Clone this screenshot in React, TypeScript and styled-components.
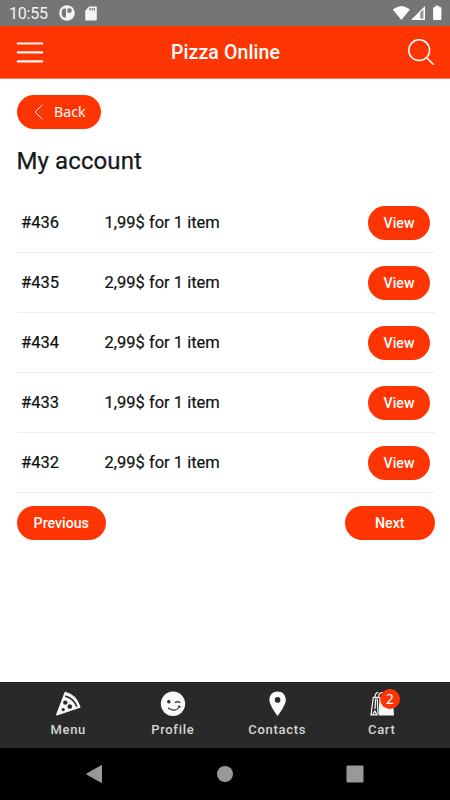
import React from "react";
import styled, { createGlobalStyle } from "styled-components";

const RED = "#ff3403";

const GlobalStyle = createGlobalStyle`
  * { box-sizing: border-box; }
  body { margin: 0; background: #fff; font-family: Roboto, "Liberation Sans", sans-serif; }
  svg { display: block; flex: none; }
`;

const Screen = styled.div`
  width: 450px;
  height: 800px;
  display: flex;
  flex-direction: column;
  overflow: hidden;
  background: #fff;
`;

const StatusBar = styled.div`
  height: 26px;
  flex: none;
  display: flex;
  align-items: center;
  background: #757575;
  color: #fff;
  padding: 0 8px 0 9px;
`;

const Clock = styled.span`
  width: 50px;
  font-size: 16px;
  line-height: 26px;
  letter-spacing: -0.2px;
  padding-top: 2px;
  color: #f3f3f3;
`;

const StatusIcons = styled.div`
  display: flex;
  align-items: center;
  gap: 10px;
`;

const StatusSpacer = styled.div`
  flex: 1;
`;

const Header = styled.header`
  height: 53px;
  flex: none;
  display: grid;
  grid-template-columns: 60px 1fr 60px;
  align-items: center;
  background: ${RED};
  border-bottom: 1px solid #ff765a;
  padding: 0 15px 0 16px;
`;

const HeaderTitle = styled.h1`
  margin: 0;
  padding-top: 1px;
  font-size: 19.5px;
  font-weight: 500;
  line-height: 24px;
  letter-spacing: 0.1px;
  text-align: center;
  color: #fff;
`;

const HeaderEnd = styled.div`
  justify-self: end;
`;

const Content = styled.main`
  flex: 1;
  padding: 16px 15.5px 0 16.5px;
`;

const Button = styled.button<{ $width: number }>`
  width: ${(p) => p.$width}px;
  height: 34px;
  border: 0;
  border-radius: 17px;
  padding: 1px 0 0;
  display: flex;
  align-items: center;
  justify-content: center;
  background: ${RED};
  color: #fff;
  font: 500 14.2px/21px Roboto, sans-serif;
`;

const BackButton = styled(Button)`
  justify-content: flex-start;
  padding: 0 0 0 17px;
  gap: 11.5px;
  font: 400 14.2px/20px "Noto Sans", sans-serif;
`;

const PageTitle = styled.h2`
  margin: 17px 0 17px;
  font-size: 24px;
  font-weight: 400;
  line-height: 30px;
  letter-spacing: 0.1px;
  color: #17191b;
  -webkit-text-stroke: 0.25px #17191b;
`;

const OrderRow = styled.div`
  height: 60px;
  display: grid;
  grid-template-columns: 83.5px 1fr auto;
  align-items: center;
  padding: 0 4.5px 0 4.5px;
  border-bottom: 1px solid #eee;
  font-size: 16.5px;
  line-height: 22px;
  color: #111;
  -webkit-text-stroke: 0.2px #111;

  ${Button} { -webkit-text-stroke: 0; }
`;

const Pager = styled.div`
  display: flex;
  justify-content: space-between;
  padding-top: 13px;
`;

const TabBar = styled.nav`
  height: 66px;
  flex: none;
  display: grid;
  grid-template-columns: repeat(4, 104.5px);
  justify-content: center;
  background: #292929;
  border-top: 1px solid #1c1c1c;
`;

const Tab = styled.div`
  display: flex;
  flex-direction: column;
  align-items: center;
  padding-top: 8px;
  gap: 5px;
  font-size: 13px;
  font-weight: 500;
  line-height: 16px;
  letter-spacing: 0.7px;
  color: #d4d4d4;
`;

const TabIcon = styled.div`
  position: relative;
  height: 26px;
`;

const Badge = styled.span`
  position: absolute;
  top: -2px;
  left: 11px;
  width: 20px;
  height: 20px;
  border-radius: 50%;
  background: ${RED};
  color: #fff;
  font: 400 13.5px/20px "Noto Sans", sans-serif;
  letter-spacing: 0;
  text-align: center;
`;

const SystemNav = styled.div`
  height: 52px;
  flex: none;
  display: grid;
  grid-template-columns: repeat(3, 130px);
  justify-content: center;
  align-items: center;
  justify-items: center;
  background: #000;
`;

const AppNotice = () => (
  <svg width="16" height="16" viewBox="0 0 16 16">
    <circle cx="8" cy="8" r="7.8" fill="#f4f4f4" />
    <path d="M6.9 3.5H5.4C3.6 3.5 2.7 5 2.7 7.2v1.2c0 2 .9 3.7 2.6 4h1.6z" fill="#757575" />
    <circle cx="10.4" cy="5.6" r="2.4" fill="#757575" />
    <circle cx="10.1" cy="5.5" r=".8" fill="#aaa" />
  </svg>
);

const SdCard = () => (
  <svg width="12" height="15" viewBox="0 0 12 15">
    <path d="M4.2.5H11q.8 0 .8.8v12.4q0 .8-.8.8H1q-.8 0-.8-.8V4.7z" fill="#f4f4f4" />
    <path d="M5 2v2.4M7.2 2v2.4M9.4 2v2.4" stroke="#666" strokeWidth="1.1" />
  </svg>
);

const Signals = () => (
  <svg width="50" height="16" viewBox="392 5 50 16">
    <path d="M392.8 9.6Q401.4 2.5 410 9.6L401.4 20z" fill="#fff" />
    <path d="M411 20L425 6v14z" fill="#fff" />
    <path d="M420.4 12.5l3-2.8v8.8h-3z" fill="#757575" />
    <path d="M422.3 12v5.8" stroke="#ddd" strokeWidth=".7" />
    <path d="M433.8 7.2h1.4V5.8h4v1.4h1.5q.7 0 .7.7v11.4q0 .7-.7.7h-6.9q-.7 0-.7-.7V7.9q0-.7.7-.7z" fill="#fff" />
  </svg>
);

const Hamburger = () => (
  <svg width="28" height="24" viewBox="0 0 28 24">
    <path d="M1.8 3.5h24.4M1.8 12.4h24.4M1.8 21.4h24.4" stroke="#fff5f2" strokeWidth="2.2" strokeLinecap="round" />
  </svg>
);

const Search = () => (
  <svg width="28" height="28" viewBox="0 0 28 28">
    <circle cx="12.2" cy="12.2" r="10.4" fill="none" stroke="#fff" strokeWidth="1.5" />
    <path d="M19.5 19.5l7.2 7.2" stroke="#fff" strokeWidth="1.6" />
  </svg>
);

const Chevron = () => (
  <svg width="9" height="16" viewBox="0 0 9 16">
    <path d="M8.3 1L1 8l7.3 7" fill="none" stroke="#fff" strokeWidth="1" />
  </svg>
);

const Pizza = () => (
  <svg width="26" height="26" viewBox="0 0 26 26">
    <path d="M10.2 1.4Q21.2 4 24.8 16L1.8 23.8z" fill="#f7f7f7" stroke="#f7f7f7" strokeWidth="1.4" strokeLinejoin="round" />
    <path d="M10.8 5.2Q18.6 7.5 21.6 15" fill="none" stroke="#292929" strokeWidth="1.6" strokeLinecap="round" />
    <circle cx="10.3" cy="11.6" r="2.2" fill="#292929" />
    <circle cx="14.8" cy="15.6" r="2.3" fill="#292929" />
    <circle cx="8.2" cy="18.6" r="1.6" fill="#292929" />
  </svg>
);

const Wink = () => (
  <svg width="26" height="26" viewBox="0 0 26 26">
    <circle cx="13" cy="12.8" r="12.2" fill="#f8fafa" />
    <circle cx="8.8" cy="10.7" r="1.7" fill="#292929" />
    <path d="M15.2 11.5q2.5-1.8 4.8 0" fill="none" stroke="#292929" strokeWidth="1.1" strokeLinecap="round" />
    <path d="M8.6 17.2q6.8 4.7 11-1.7M18.5 15l1.7.9" fill="none" stroke="#292929" strokeWidth="1.2" strokeLinecap="round" />
  </svg>
);

const Pin = () => (
  <svg width="26" height="26" viewBox="0 0 26 26">
    <path fillRule="evenodd" d="M13.6.6C8.9.6 5.4 4.1 5.4 8.8c0 5.8 8.2 16.2 8.2 16.2s8.2-10.4 8.2-16.2c0-4.7-3.5-8.2-8.2-8.2zM13.6 6.1a2.8 2.8 0 1 1 0 5.6 2.8 2.8 0 0 1 0-5.6z" fill="#f8fafa" />
  </svg>
);

const Bags = () => (
  <svg width="26" height="26" viewBox="0 0 26 26">
    <path d="M10.3 6H23.8l1.2 18.6H9.8z" fill="#f8fafa" />
    <path d="M8.9 6.4H4.3L2 23.9h5.9l-2-4-2 3.4M6.6 7.6L6 18M8.2 7.2l.8 16" fill="none" stroke="#f8fafa" strokeWidth="1.2" />
    <path d="M6.1 6.2V4.5Q6.6 1.7 9.4 1.3M9.7 7V5.2q.5-3.4 4-3.8" fill="none" stroke="#f8fafa" strokeWidth="1.2" />
    <path d="M14.6 15h1.6" stroke="#292929" strokeWidth="1" />
  </svg>
);

const orders = [
  { id: "#436", summary: "1,99$ for 1 item" },
  { id: "#435", summary: "2,99$ for 1 item" },
  { id: "#434", summary: "2,99$ for 1 item" },
  { id: "#433", summary: "1,99$ for 1 item" },
  { id: "#432", summary: "2,99$ for 1 item" },
];

const tabs = [
  { label: "Menu", Icon: Pizza },
  { label: "Profile", Icon: Wink },
  { label: "Contacts", Icon: Pin },
  { label: "Cart", Icon: Bags, count: 2 },
];

export default function App() {
  return (
    <Screen>
      <GlobalStyle />
      <StatusBar>
        <Clock>10:55</Clock>
        <StatusIcons>
          <AppNotice />
          <SdCard />
        </StatusIcons>
        <StatusSpacer />
        <Signals />
      </StatusBar>
      <Header>
        <Hamburger />
        <HeaderTitle>Pizza Online</HeaderTitle>
        <HeaderEnd>
          <Search />
        </HeaderEnd>
      </Header>
      <Content>
        <BackButton $width={84}>
          <Chevron />
          Back
        </BackButton>
        <PageTitle>My account</PageTitle>
        {orders.map((order) => (
          <OrderRow key={order.id}>
            <span>{order.id}</span>
            <span>{order.summary}</span>
            <Button $width={62}>View</Button>
          </OrderRow>
        ))}
        <Pager>
          <Button $width={89.5}>Previous</Button>
          <Button $width={89.5}>Next</Button>
        </Pager>
      </Content>
      <TabBar>
        {tabs.map(({ label, Icon, count }) => (
          <Tab key={label}>
            <TabIcon>
              <Icon />
              {count && <Badge>{count}</Badge>}
            </TabIcon>
            {label}
          </Tab>
        ))}
      </TabBar>
      <SystemNav>
        <svg width="20" height="20" viewBox="0 0 20 20">
          <path d="M16.5 1.5v17L1.5 10z" fill="#999" stroke="#999" strokeLinejoin="round" />
        </svg>
        <svg width="18" height="18" viewBox="0 0 18 18">
          <circle cx="9" cy="9" r="8" fill="#999" />
        </svg>
        <svg width="18" height="18" viewBox="0 0 18 18">
          <rect x=".5" y=".5" width="17" height="17" rx="1" fill="#999" />
        </svg>
      </SystemNav>
    </Screen>
  );
}
